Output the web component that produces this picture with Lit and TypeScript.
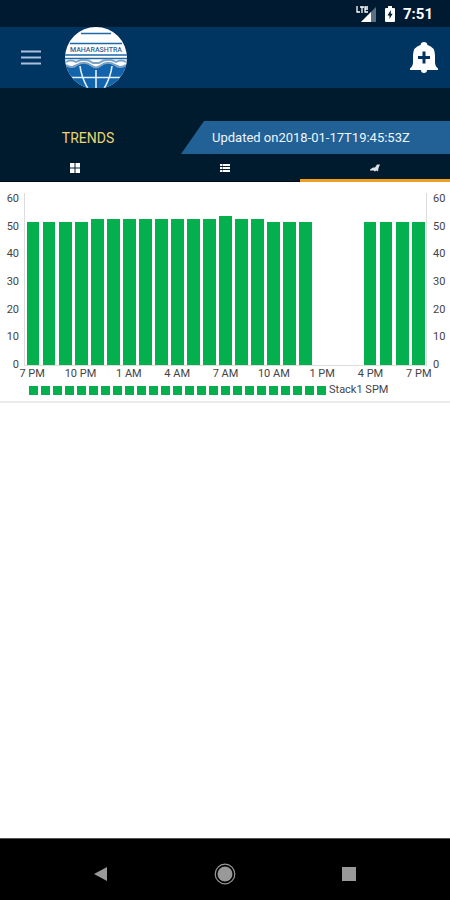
import { LitElement, html, css } from "lit";
import { customElement, property } from "lit/decorators.js";

const READINGS: (number | null)[] = [
  ...Array(4).fill(51.7),
  ...Array(8).fill(52.8),
  53.8,
  52.8,
  52.8,
  ...Array(3).fill(51.7),
  null,
  null,
  null,
  ...Array(4).fill(51.7),
];
const HOURS = ["7 PM", "10 PM", "1 AM", "4 AM", "7 AM", "10 AM", "1 PM", "4 PM", "7 PM"];
const TICKS = [60, 50, 40, 30, 20, 10, 0];
const AXIS_MAX = 62;

@customElement("status-bar")
export class StatusBar extends LitElement {
  static styles = css`
    :host {
      display: flex;
      align-items: center;
      justify-content: flex-end;
      height: 27px;
      padding-right: 17px;
      background: #001a31;
      color: #fff;
      font-size: 15px;
      font-weight: 700;
    }
    .signal {
      margin-right: 9px;
    }
    .battery {
      margin-right: 8px;
    }
  `;

  render() {
    return html`
      <svg class="signal" width="20" height="16" viewBox="0 0 20 16" aria-label="LTE signal">
        <path d="M20 1v15H5z" fill="#5d7083" />
        <path d="M15 6v10H5z" fill="#fff" />
        <path d="M1 0v6h3M4 1h4M6 1v6M12 1H9v5h3M9 3h3" fill="none" stroke="#001a31" stroke-width="3" />
        <path d="M1 0v6h3M4 1h4M6 1v6M12 1H9v5h3M9 3h3" fill="none" stroke="#fff" stroke-width="1.3" />
      </svg>
      <svg class="battery" width="10" height="16" viewBox="0 0 10 16" aria-label="Charging">
        <path d="M3 0h4v2h2q1 0 1 1v12q0 1-1 1H1q-1 0-1-1V3q0-1 1-1h2z" fill="#fff" />
        <path d="M5.8 4 2.5 9.6h2V13l3.1-5.2H5.8z" fill="#001a31" />
      </svg>
      <span>7:51</span>
    `;
  }
}

@customElement("app-header")
export class AppHeader extends LitElement {
  static styles = css`
    :host {
      display: flex;
      align-items: center;
      height: 61px;
      padding: 0 12px 0 20px;
      background: #003461;
    }
    button {
      display: flex;
      padding: 0;
      border: 0;
      background: none;
    }
    .logo {
      margin-left: 23px;
    }
    .bell {
      margin-left: auto;
    }
  `;

  render() {
    return html`
      <button aria-label="Menu">
        <svg width="22" height="16" viewBox="0 0 22 16">
          <path d="M1 1.500h20M1 7.500h20M1 13.500h20" stroke="#a9c1df" stroke-width="2.2" />
        </svg>
      </button>
      <svg class="logo" width="62" height="62" viewBox="0 0 62 62" role="img" aria-label="Maharashtra">
        <defs>
          <clipPath id="disc"><circle cx="31" cy="31" r="31" /></clipPath>
        </defs>
        <g clip-path="url(#disc)">
          <rect width="62" height="62" fill="#fff" />
          <path d="M16 6.500h30M5 16.500h52M0 28h62M0 31.500h62" stroke="#1d68a8" stroke-width="1.6" />
          <path d="M0 37q5 4 10 1l9-3 12 5 12-5 9 3q5 3 10-1v25H0z" fill="#1265ad" />
          <path
            d="M1 35q5-3 10 0 9-5 17 1h6q8-6 17-1 5-3 10 0M1 38q6 4 11 0 8-5 15 1 4 3 8 0 7-6 15-1 5 4 11 0"
            fill="none" stroke="#7ea3c5" stroke-width="2"
          />
          <path d="M5 50.500h52M31 43v19M15 39q1 10 8 23M47 39q-1 10-8 23" fill="none" stroke="#e4f0fb" stroke-width="1.6" />
          <text x="31" y="25" text-anchor="middle" font-family="Roboto, sans-serif" font-size="7" font-weight="500" fill="#2b6597">MAHARASHTRA</text>
        </g>
      </svg>
      <button class="bell" aria-label="Add alert">
        <svg width="28" height="32" viewBox="0 0 28 32">
          <path
            d="M14 0q3 0 3.500 3 7.500 2 7.500 10v7q0 4 3 6.500V28H0v-1.500Q3 24 3 20v-7Q3 5 10.500 3 11 0 14 0zM11 28h6q0 3-3 3t-3-3z"
            fill="#fff"
          />
          <path d="M14 9.500v12M8 15.500h12" stroke="#003461" stroke-width="3" />
        </svg>
      </button>
    `;
  }
}

@customElement("view-tabs")
export class ViewTabs extends LitElement {
  static styles = css`
    :host {
      display: block;
      padding-top: 33px;
      background: #001a2e;
    }
    .heading {
      display: flex;
      align-items: center;
      height: 33px;
    }
    h1 {
      flex: 1;
      margin: 0;
      padding-right: 4px;
      color: #e9d672;
      font-size: 14px;
      font-weight: 400;
      text-align: center;
    }
    .updated {
      width: 60%;
      box-sizing: border-box;
      padding-left: 32px;
      background: #226196;
      clip-path: polygon(24px 0, 100% 0, 100% 100%, 1px 100%);
      color: #eef5fc;
      font-size: 13px;
      line-height: 33px;
      white-space: nowrap;
    }
    nav {
      display: grid;
      grid-template-columns: repeat(3, 1fr);
    }
    button {
      display: flex;
      align-items: center;
      justify-content: center;
      height: 28px;
      padding: 0;
      border: 0;
      border-bottom: 1px solid #000b16;
      background: none;
    }
    .active {
      border-bottom: 3px solid #f0a01f;
      padding-top: 2px;
    }
  `;

  render() {
    return html`
      <div class="heading">
        <h1>TRENDS</h1>
        <div class="updated">Updated on2018-01-17T19:45:53Z</div>
      </div>
      <nav>
        <button aria-label="Grid">
          <svg width="10" height="10" viewBox="0 0 10 10">
            <path d="M0 0h4.500v4.500H0zM5.500 0H10v4.500H5.500zM0 5.500h4.500V10H0zM5.500 5.500H10V10H5.500z" fill="#fff" />
          </svg>
        </button>
        <button aria-label="List">
          <svg width="10" height="10" viewBox="0 0 10 10">
            <path d="M0 2h2M2.500 2H10M0 5h2M2.500 5H10M0 8h2M2.500 8H10" stroke="#fff" stroke-width="1.8" />
          </svg>
        </button>
        <button class="active" aria-label="Trends">
          <svg width="10" height="10" viewBox="0 0 10 10">
            <path d="M0 6.500 3 4.500h2L7 1.500h3L8.500 5 8 8.500 6.500 7.500 5 8.500 3.500 7.500H0z" fill="#dfe2e5" />
          </svg>
        </button>
      </nav>
    `;
  }
}

@customElement("trend-chart")
export class TrendChart extends LitElement {
  @property({ attribute: false }) readings: (number | null)[] = [];

  static styles = css`
    :host {
      display: block;
      padding: 11px 0 5px;
      border-bottom: 2px solid #ebebeb;
      background: #fff;
      color: #444;
      font-size: 11px;
      line-height: 12px;
    }
    .frame {
      display: grid;
      grid-template-columns: 24px 1fr 23px;
    }
    .axis {
      display: flex;
      flex-direction: column;
      justify-content: space-between;
      height: 178px;
      text-align: right;
      padding-right: 5px;
    }
    .axis.right {
      padding: 0 0 0 6px;
      text-align: left;
    }
    .plot {
      display: flex;
      align-items: flex-end;
      height: 173px;
      box-sizing: border-box;
      border: 1px solid #dcdcdc;
      border-top: 0;
    }
    .slot {
      display: flex;
      flex: 1;
      align-items: flex-end;
      justify-content: center;
      height: 100%;
    }
    .bar {
      width: 80%;
      background: #04b04d;
    }
    .hours {
      display: grid;
      grid-template-columns: repeat(9, 1fr);
      margin: -3px 7px 0 8px;
      text-align: center;
      white-space: nowrap;
    }
    .legend {
      display: flex;
      align-items: center;
      gap: 3px;
      margin: 4px 0 0 29px;
    }
    .key {
      width: 9px;
      height: 9px;
      background: #04b04d;
    }
  `;

  render() {
    const axis = TICKS.map((t) => html`<span>${t}</span>`);
    return html`
      <div class="frame">
        <div class="axis">${axis}</div>
        <div class="plot">
          ${this.readings.map(
            (v) => html`<div class="slot">
              ${v === null ? "" : html`<div class="bar" style="height:${(v / AXIS_MAX) * 100}%"></div>`}
            </div>`,
          )}
        </div>
        <div class="axis right">${axis}</div>
      </div>
      <div class="hours">${HOURS.map((h) => html`<span>${h}</span>`)}</div>
      <div class="legend">
        ${this.readings.map(() => html`<span class="key"></span>`)}
        <span>Stack1 SPM</span>
      </div>
    `;
  }
}

@customElement("system-nav")
export class SystemNav extends LitElement {
  static styles = css`
    :host {
      display: flex;
      align-items: center;
      justify-content: space-between;
      height: 62px;
      padding: 9px 90px 0;
      box-sizing: border-box;
      border-top: 1px solid #555;
      background: #000;
    }
    button {
      display: flex;
      padding: 0;
      border: 0;
      background: none;
    }
  `;

  render() {
    return html`
      <button aria-label="Back">
        <svg width="22" height="22" viewBox="0 0 22 22"><path d="M17 4v14L4 11z" fill="#999" /></svg>
      </button>
      <button aria-label="Home">
        <svg width="22" height="22" viewBox="0 0 22 22">
          <circle cx="11" cy="11" r="9.8" fill="none" stroke="#999" stroke-width="1.2" />
          <circle cx="11" cy="11" r="7.5" fill="#999" />
        </svg>
      </button>
      <button aria-label="Recent apps">
        <svg width="22" height="22" viewBox="0 0 22 22"><path d="M4 4h14v14H4z" fill="#999" /></svg>
      </button>
    `;
  }
}

@customElement("app-root")
export class AppRoot extends LitElement {
  static styles = css`
    :host {
      display: flex;
      flex-direction: column;
      min-height: 100vh;
      background: #fff;
      font-family: Roboto, sans-serif;
    }
    main {
      flex: 1;
    }
  `;

  render() {
    return html`
      <status-bar></status-bar>
      <app-header></app-header>
      <view-tabs></view-tabs>
      <main><trend-chart .readings=${READINGS}></trend-chart></main>
      <system-nav></system-nav>
    `;
  }
}
